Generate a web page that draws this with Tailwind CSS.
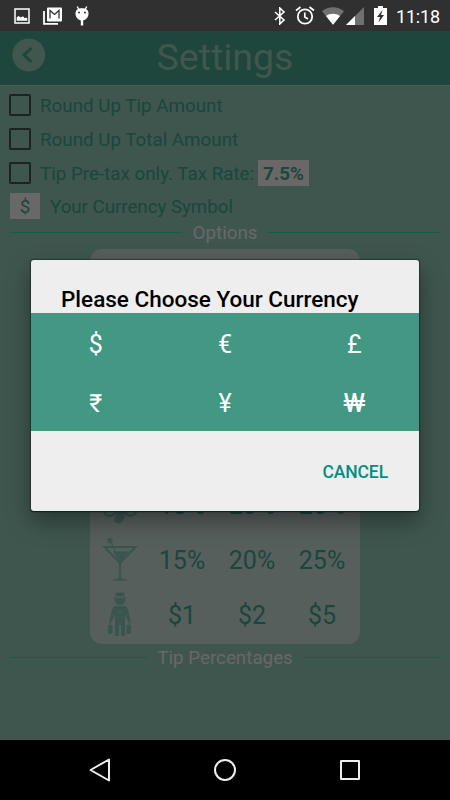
<!DOCTYPE html>
<html lang="en">
<head>
  <meta charset="UTF-8">
  <title>Settings</title>
  <meta name="viewport" content="width=device-width, initial-scale=1">
  <script src="https://cdn.jsdelivr.net/npm/@tailwindcss/browser@4"></script>
</head>

<body class="bg-black font-['Roboto',sans-serif]">
  <div class="relative w-[450px] h-[800px] flex flex-col overflow-hidden bg-[#3f564f]">

    <!-- Status bar -->
    <div class="h-[31px] shrink-0 bg-[#303030] flex items-center text-white pl-[14px] pr-[10px]">
      <svg class="w-4 h-4" viewBox="0 0 16 16">
        <rect x="1" y="1" width="14" height="14" fill="none" stroke="#fff" stroke-width="1.5" />
        <path d="M2.7 12.8V9.2l2-1.2 1.8 1.6L9 8.2l1.6 2 1.6-.8 1.1 1.4v2z" fill="#fff" />
      </svg>
      <svg class="w-5 h-[18px] ml-[13px]" viewBox="0 0 20 18">
        <path d="M1 4v12.8h14" fill="none" stroke="#fff" stroke-width="1.8" />
        <rect x="4" y="0.5" width="15" height="14" rx="1" fill="#fff" />
        <path d="M7 11.5V3.5l4.5 4L16 3.5v8" fill="none" stroke="#303030" stroke-width="1.3" />
      </svg>
      <svg class="w-4 h-5 ml-[11px]" viewBox="0 0 16 20">
        <path d="M3.2.5l2 3.5M12.8.5l-2 3.5" stroke="#fff" stroke-width="1.4" />
        <path d="M1.5 7.5C1.5 4 4 2.2 8 2.2s6.5 1.8 6.5 5.3c0 4-3 7-6.5 7s-6.5-3-6.5-7z" fill="#fff" />
        <path d="M8 14v5.5" stroke="#fff" stroke-width="2.4" />
        <circle cx="5" cy="6.5" r="1" fill="#303030" />
        <circle cx="11" cy="6.5" r="1" fill="#303030" />
      </svg>
      <svg class="w-3 h-[18px] ml-auto" viewBox="0 0 12 18">
        <path d="M1 5l9 8-4.2 4V1L10 5l-9 8" fill="none" stroke="#fff" stroke-width="1.6" />
      </svg>
      <svg class="w-5 h-[19px] ml-[9px]" viewBox="0 0 20 19">
        <circle cx="10" cy="10.5" r="7.2" fill="none" stroke="#fff" stroke-width="1.8" />
        <path d="M9.8 6.5v4.5l3.2 2M1 4.5L5.5 1M19 4.5L14.5 1" fill="none" stroke="#fff" stroke-width="1.7" />
      </svg>
      <svg class="w-[22px] h-[18px] ml-[7px]" viewBox="0 0 22 18">
        <path d="M0 4.2C6-1.2 16-1.2 22 4.2L11 17.7z" fill="#707070" />
        <path d="M4 9.1c4-3 10-3 14 0l-7 8.6z" fill="#fff" />
      </svg>
      <svg class="w-[18px] h-[18px] ml-[2px]" viewBox="0 0 18 18">
        <path d="M0 18L18 0v18z" fill="#707070" />
        <path d="M0 18l9-9v9z" fill="#fff" />
      </svg>
      <svg class="w-[13px] h-[19px] ml-[10px]" viewBox="0 0 13 19">
        <path d="M4 0h5v2h4v17H0V2h4z" fill="#fff" />
        <path d="M8.5 4L3 11h3l-1.5 5.5L10 9H7z" fill="#303030" />
      </svg>
      <span class="w-[44px] ml-[9px] mt-[2px] text-[18px] leading-none tracking-[-0.2px] whitespace-nowrap">11:18</span>
    </div>

    <!-- Header -->
    <div class="h-[54px] shrink-0 bg-[#1e463c] grid grid-cols-[90px_1fr_90px] items-center text-[#40564f]">
      <svg class="w-[34px] h-[34px] ml-3 -mt-[6px]" viewBox="0 0 34 34">
        <circle cx="16.7" cy="17" r="16.5" fill="#40564f" />
        <path d="M19.5 10l-7.5 7 7.5 7" fill="none" stroke="#1e463c" stroke-width="3" />
      </svg>
      <h1 class="text-center text-[37.5px] leading-none">Settings</h1>
    </div>

    <!-- Options -->
    <div class="pt-[3px] px-[9px] text-[18.8px] text-[#19473b] shadow-[inset_0_1px_0_#495f58]">
      <div class="h-[34px] flex items-center gap-[9px]">
        <span class="w-[22px] h-[22px] border-2 border-[#1b2422] rounded-[2px]"></span><span class="pt-[2px]">Round Up Tip Amount</span>
      </div>
      <div class="h-[34px] flex items-center gap-[9px]">
        <span class="w-[22px] h-[22px] border-2 border-[#1b2422] rounded-[2px]"></span><span class="pt-[2px]">Round Up Total Amount</span>
      </div>
      <div class="h-[34px] flex items-center gap-[9px]">
        <span class="w-[22px] h-[22px] border-2 border-[#1b2422] rounded-[2px]"></span>
        <span class="w-[214px] pt-[2px] whitespace-nowrap">Tip Pre-tax only. Tax Rate:</span>
        <span class="-ml-[5px] w-[51px] h-[26px] pt-[2px] bg-[#696767] font-bold flex items-center justify-center">7.5%</span>
      </div>
      <div class="h-[32px] flex items-center gap-[10px] pl-px">
        <span class="w-[30px] h-[26px] pt-[2px] bg-[#696767] flex items-center justify-center">$</span><span class="pt-[2px] tracking-[-0.05px]">Your Currency Symbol</span>
      </div>
    </div>
    <div class="h-[20px] px-[10px] flex items-center gap-[11px] text-[18.8px] leading-none text-[#6b6768]">
      <span class="flex-1 h-px bg-[#125f47]"></span><span class="pt-[2px]">Options</span><span class="flex-1 h-px bg-[#125f47]"></span>
    </div>

    <!-- Percentages card -->
    <div class="mt-[7px] w-[270px] h-[395px] shrink-0 mx-auto rounded-[12px] bg-[#575f5d] flex flex-col justify-end pb-[1px] text-[25px] text-[#19473b]">
      <div class="h-[55px] grid grid-cols-[57px_70px_70px_70px] items-center text-center">
        <svg class="w-9 h-9 ml-3" viewBox="0 0 36 36" fill="none" stroke="#39554d" stroke-width="2.6">
          <path d="M2 21c0 9 8 9 13 2M22 23c4 7 12 5 12-1" />
          <path d="M19 21c-6 5-8 11-5 14 6 2 9-4 9-12z" fill="#39554d" stroke="none" />
        </svg>
        <span>18%</span><span>20%</span><span>25%</span>
      </div>
      <div class="h-[55px] grid grid-cols-[57px_70px_70px_70px] items-center text-center">
        <svg class="w-9 h-[44px] ml-3 -mt-[3px]" viewBox="0 0 36 44">
          <path d="M2.5 10h31L18 26z" fill="none" stroke="#39554d" stroke-width="2.2" />
          <path d="M11 14.5h16L18 25z" fill="#39554d" />
          <path d="M18 25v17" stroke="#39554d" stroke-width="2.2" />
          <path d="M8.5 4l5.5 12" stroke="#39554d" stroke-width="1.2" />
          <path d="M11 43.5c0-1.5 4-2 7-2s7 .5 7 2z" fill="#39554d" />
          <circle cx="8" cy="3.5" r="2.7" fill="#39554d" />
        </svg>
        <span>15%</span><span>20%</span><span>25%</span>
      </div>
      <div class="h-[55px] grid grid-cols-[57px_70px_70px_70px] items-center text-center">
        <svg class="w-6 h-11 ml-[18px] -mt-[3px]" viewBox="0 0 24 44" fill="#39554d">
          <path d="M7.5 1Q12-.5 16.5 1v3q-4.5 1.5-9 0z" />
          <path d="M6.5 5q5.500 2 11 0v2.500a5.500 5.500 0 0 1-11 0z" />
          <path d="M8 14h8q3 0 4 4l3 12-2 1-4-8v21h-4V33h-2v11H7V23L3 31l-2-1 3-12q1-4 4-4z" />
          <rect x="0" y="33" width="4.5" height="9" rx="1.5" />
          <rect x="18.5" y="33" width="4.5" height="9" rx="1.5" />
          <path d="M2 34v-3M21 34v-3" stroke="#39554d" />
          <path d="M10.2 18v8M13.8 18v8" stroke="#575f5d" stroke-dasharray="1.3 2" />
        </svg>
        <span>$1</span><span>$2</span><span>$5</span>
      </div>
    </div>
    <div class="h-[27px] px-[10px] flex items-center gap-[10px] text-[18.8px] leading-none text-[#6b6768]">
      <span class="flex-1 h-px bg-[#125f47]"></span><span class="pt-[2px]">Tip Percentages</span><span class="flex-1 h-px bg-[#125f47]"></span>
    </div>

    <!-- Navigation bar -->
    <div class="mt-auto h-[60px] shrink-0 bg-black flex items-center justify-between px-[88px]">
      <svg class="w-6 h-6" viewBox="0 0 24 24" fill="none" stroke="#eee" stroke-width="2" stroke-linejoin="round"><path d="M2.5 12L21 1.5v21z" /></svg>
      <svg class="w-6 h-6" viewBox="0 0 24 24" fill="none" stroke="#eee" stroke-width="2"><circle cx="12" cy="12" r="10" /></svg>
      <svg class="w-6 h-6" viewBox="0 0 24 24" fill="none" stroke="#eee" stroke-width="2" stroke-linejoin="round"><path d="M3 3h18v18H3z" /></svg>
    </div>

    <!-- Currency dialog -->
    <div class="absolute left-[31px] top-[260px] w-[388px] h-[251px] rounded-[3px] bg-[#eee] flex flex-col shadow-[0_1px_1px_0_#0b241b,0_0_1px_1px_rgba(11,36,27,0.5),0_10px_24px_rgba(0,0,0,0.38)]">
      <h2 class="h-[53px] pt-[26px] pl-[30px] text-[22.5px] leading-[26px] font-medium text-black whitespace-nowrap">Please Choose Your Currency</h2>
      <div class="h-[118px] bg-[#429883] grid grid-cols-3 grid-rows-[58px_60px] place-items-center pt-[3px] text-[25px] text-white">
        <span>$</span><span>€</span><span>£</span>
        <span>₹</span><span>¥</span><span class="scale-x-[1.2]">₩</span>
      </div>
      <div class="flex-1 flex items-center justify-end pt-[2px] pr-[31px]">
        <button class="text-[17.5px] tracking-[-0.1px] font-medium text-[#009081]">CANCEL</button>
      </div>
    </div>
  </div>
</body>
</html>
